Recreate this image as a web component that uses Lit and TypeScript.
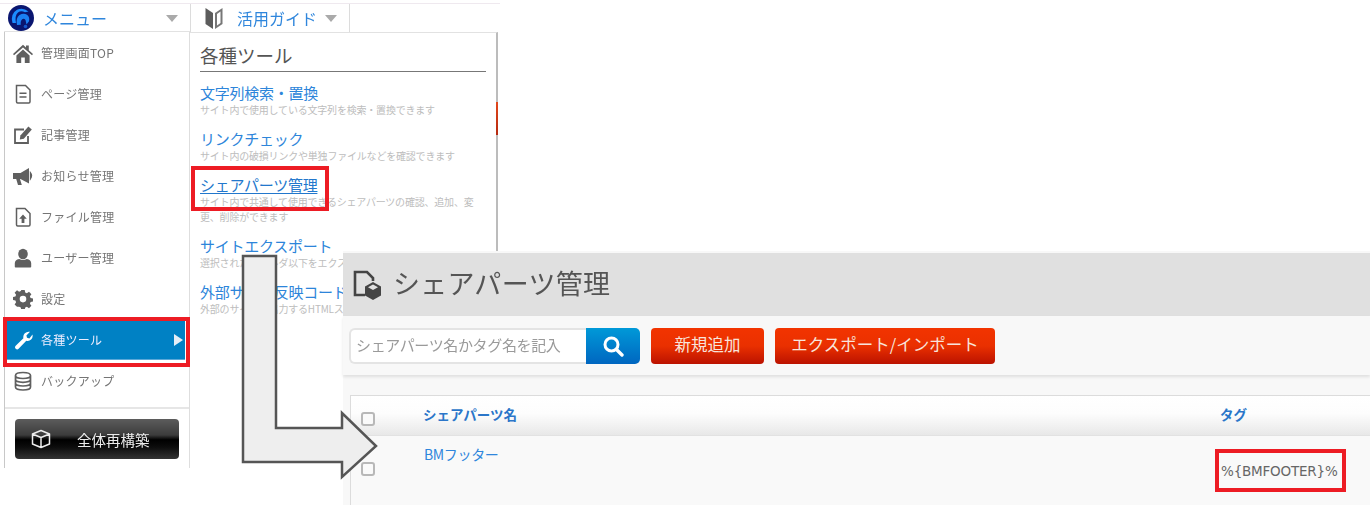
import { LitElement, html, css, svg } from "lit";
import { customElement } from "lit/decorators.js";

const ICONS: Record<string, unknown> = {
  home: svg`<path d="M0 11 10 1.800l3 2.800V2.600h2.800v4.600L20 11l-1 1.200L10 4.400 1 12.200z"/><path d="M3.400 12.600 10 6.600l6.600 6V20h-4.800v-5.500H8.200V20H3.400z"/>`,
  doc: svg`<path fill="none" stroke="currentColor" stroke-width="1.500" d="M3.500 1.500h9l4.500 4.500v11.800q0 1.200-1.200 1.200H4.700q-1.200 0-1.200-1.200z"/><path d="M6.500 8.400h7v1.500h-7zM6.500 12.200h7v1.500h-7z"/>`,
  edit: svg`<path fill="none" stroke="currentColor" stroke-width="1.800" d="M15 11v7H2V4.500h9"/><path d="M6.800 14.500l.6-4L15.400 1.500l3.400 3-8 9.200z"/>`,
  mega: svg`<path d="M0 7h7.500L16 2v15.500L7.500 13H7l1.800 6H5L3.200 13H0z"/><path d="M17.400 6.500q2.400 3 0 6.500z" stroke="currentColor" stroke-width="1.200"/>`,
  file: svg`<path fill="none" stroke="currentColor" stroke-width="1.500" d="M3.500 1.500h8.500l5 5v11.300q0 1.200-1.200 1.200H4.700q-1.200 0-1.200-1.200z"/><path d="M10 7.500l3.800 4.200h-2.400V16H8.600v-4.300H6.200z"/>`,
  user: svg`<ellipse cx="10" cy="6" rx="4.800" ry="5.200"/><path d="M1.800 18.800v-3.500Q1.800 11.800 6.200 11q3.800 2 7.600 0 4.400.8 4.400 4.300v3.500q0 .7-.8.7H2.600q-.8 0-.8-.7z"/>`,
  gear: svg`<path fill-rule="evenodd" d="M8.300 1h3.400l.5 2.600 1.700.7L16 2.800l2.400 2.400-1.500 2.100.7 1.700 2.600.5v3l-2.600.5-.7 1.700 1.500 2.100-2.400 2.400-2.100-1.500-1.700.7-.5 2.600H8.300l-.5-2.600-1.700-.7L4 17.800l-2.400-2.400 1.500-2.100-.7-1.700L-.2 11V8l2.600-.5.700-1.700-1.500-2.100L4 1.300l2.100 1.500 1.700-.7zM10 6.800a3.300 3.300 0 1 0 0 6.600 3.300 3.300 0 0 0 0-6.600z"/>`,
  wrench: svg`<path d="M19.500 4.600q.6 3-1.400 5-2 1.900-4.800 1.200L5.600 18.800q-1.400 1.200-2.900 0-1.400-1.500 0-3l7.700-7.500Q9.800 5.400 11.800 3.200 14 1.200 17 1.800L13.400 5.400l.6 2.400 2.400.6z"/>`,
  db: svg`<path fill="none" stroke="currentColor" stroke-width="1.700" d="M2.500 4.500Q2.500 1.500 10 1.500t7.500 3v11.500q0 3-7.500 3t-7.500-3zM2.500 4.500q0 3 7.500 3t7.500-3M2.500 8.300q0 3 7.500 3t7.500-3M2.500 12q0 3 7.500 3t7.500-3"/>`,
};

const ITEMS = [
  ["home", "管理画面TOP"],
  ["doc", "ページ管理"],
  ["edit", "記事管理"],
  ["mega", "お知らせ管理"],
  ["file", "ファイル管理"],
  ["user", "ユーザー管理"],
  ["gear", "設定"],
  ["wrench", "各種ツール"],
  ["db", "バックアップ"],
];

const TOOLS = [
  ["文字列検索・置換", "サイト内で使用している文字列を検索・置換できます"],
  ["リンクチェック", "サイト内の破損リンクや単独ファイルなどを確認できます"],
  ["シェアパーツ管理", "サイト内で共通して使用できるシェアパーツの確認、追加、変更、削除ができます"],
  ["サイトエクスポート", "選択されたフォルダ以下をエクスポートできます"],
  ["外部サイト反映コード", "外部のサイトへ出力するHTMLスニペットです"],
];

@customElement("app-root")
export class AppRoot extends LitElement {
  static styles = css`
    :host {
      display: block;
      position: relative;
      width: 1370px;
      height: 509px;
      overflow: hidden;
      background: #fff;
      font-family: "Noto Sans CJK JP", "Noto Sans", sans-serif;
    }
    .shot { position: absolute; filter: blur(0.45px); }

    /* left screenshot */
    .menu-shot { left: 0; top: 0; width: 500px; height: 468px; padding-top: 3px; box-sizing: border-box; display: flex; flex-direction: column; }
    .topline { height: 1px; background: #efe9ef; flex: none; width: 500px; }
    .bar { height: 28px; flex: none; display: flex; align-items: center; box-sizing: border-box; }
    .tab { display: flex; align-items: center; height: 100%; box-sizing: border-box; border-right: 1px solid #dcdcdc; color: #2f86dc; line-height: 24px; }
    .tab-menu { width: 191px; padding-left: 8px; font-size: 16px; }
    .tab-guide { width: 159px; padding-left: 13px; font-size: 16px; }
    .tab-menu .logo { margin-right: 9px; }
    .tab-menu .tri { margin-left: auto; margin-right: 12px; }
    .tab-guide .book { margin-right: 13px; }
    .tab-guide .tri { margin-left: 8px; }
    .tri { width: 0; height: 0; border-style: solid; border-width: 7px 6px 0; border-color: #aaa transparent transparent; margin-top: 1px; }
    .body { flex: 1; display: flex; margin-left: 4px; position: relative; }
    aside { width: 186px; flex: none; box-sizing: border-box; border-left: 1px solid #c8c8c8; border-right: 1px solid #dedede; box-shadow: 0 -1px 0 #e2e2e2; background: #fff; }
    .row { height: 41px; margin: 0 0 0 2px; width: 178px; display: flex; align-items: center; font-size: 12px; letter-spacing: 0.25px; color: #757575; box-sizing: border-box; padding-left: 6px; }
    .row svg { width: 20px; height: 20px; fill: currentColor; color: #5f5f5f; flex: none; margin-right: 8px; }
    .row.on { background: #0081c4; color: #eef; border-bottom: 1px solid #5aa8d8; padding-top: 1px; }
    .row.on svg { color: #fff; }
    .row .go { margin-left: auto; margin-right: 2px; width: 0; height: 0; border-style: solid; border-width: 6.500px 0 6.500px 9px; border-color: transparent transparent transparent #e4eef6; }
    .rebuild-wrap { margin-top: 6px; border-top: 2px solid #e6e6e6; padding: 10px 10px 0 10px; }
    .rebuild { height: 40px; border-radius: 4px; display: flex; align-items: center; color: #ececec; font-size: 14.500px; background: linear-gradient(#5c5c5c 0%, #3c3c3c 40%, #000 52%, #0c0c0c 70%, #333 100%); padding-left: 16px; box-sizing: border-box; }
    .rebuild svg { width: 20px; height: 20px; margin-right: 26px; flex: none; }
    .sub { width: 308px; flex: none; box-sizing: border-box; border-right: 2px solid #bcbcbc; border-top: 1px solid #e2e2e2; padding: 0 10px; background: #fff; position: relative; height: 100%; }
    .sub-title { height: 38px; line-height: 44px; font-size: 18.500px; color: #555; border-bottom: 1px solid #777; margin-bottom: 10px; }
    .tool { margin-bottom: 11px; }
    .tool a { display: block; line-height: 22px; height: 20px; font-size: 15px; letter-spacing: -0.25px; color: #2d85da; white-space: nowrap; }
    .tool.cur a { color: #2277cc; text-decoration: underline; text-underline-offset: 2px; text-decoration-thickness: 1px; }
    .tool p { margin: 0; font-size: 10px; line-height: 15px; letter-spacing: -0.2px; color: #bdbdbd; }
    .peek { position: absolute; right: -2px; top: 69px; width: 2px; height: 33px; background: linear-gradient(#e2471c, #b52a10); }

    /* right screenshot */
    .parts-shot { left: 343px; top: 251px; width: 1027px; height: 254px; background: #f8f8f8; display: flex; flex-direction: column; }
    .head { margin-top: 2px; height: 63px; flex: none; background: #e0e0e0; display: flex; align-items: center; padding: 0 0 4px 9px; box-sizing: border-box; font-size: 27px; letter-spacing: 0.3px; color: #555; line-height: 40px; }
    .head svg { width: 30px; height: 32px; margin: 4px 11px 0 0; flex: none; }
    .tools { height: 59px; flex: none; box-sizing: border-box; padding: 12px 6px 0; display: flex; background: #f8f8f8; box-shadow: 0 2px 3px rgba(0,0,0,.1); }
    .search { width: 237px; height: 36px; box-sizing: border-box; background: #fff; border: 2px solid #e4e4e4; border-right: 0; border-radius: 6px 0 0 6px; color: #9a9a9a; font-size: 15px; line-height: 30px; padding-left: 5px; letter-spacing: -0.35px; white-space: nowrap; }
    .sbtn { width: 54px; height: 36px; background: linear-gradient(#0099d8, #0066c0); border-radius: 0 5px 5px 0; display: flex; align-items: center; justify-content: center; margin-right: 11px; }
    .sbtn svg { width: 22px; height: 22px; }
    .rbtn { height: 36px; border-radius: 4px; background: linear-gradient(#f23400 0%, #ea3000 50%, #bb1200 100%); color: #f8e4dc; display: flex; align-items: center; justify-content: center; box-sizing: border-box; padding-bottom: 4px; font-size: 16.500px; letter-spacing: 0; white-space: nowrap; }
    .r1 { width: 113px; margin-right: 11px; }
    .r2 { width: 220px; }
    .table { margin: 20px 0 0 7px; flex: 1; border-left: 1px solid #dcdcdc; border-top: 1px solid #dcdcdc; display: flex; flex-direction: column; min-height: 0; }
    .thead, .trow { display: grid; grid-template-columns: 72px 797px 1fr; }
    .thead { height: 40px; flex: none; align-items: center; background: linear-gradient(#fff 0%, #fdfdfd 45%, #e8e8e8 100%); border-bottom: 1px solid #e2e2e2; font-size: 13.500px; font-weight: 700; color: #2b76c9; padding-bottom: 3px; box-sizing: border-box; }
    .trow { flex: 1; background: #f9f9f9; }
    .check { width: 14px; height: 14px; box-sizing: border-box; border: 2px solid #b8b8b8; border-radius: 3px; background: #fafafa; margin-left: 10px; }
    .thead .check { margin-top: 9px; }
    .trow .check { margin-top: 26px; }
    .trow .name { margin-top: 9px; color: #2f86dc; font-size: 14px; line-height: 18px; margin-left: 1px; letter-spacing: -0.35px; }
    .trow .tag { margin-top: 25px; margin-left: 1px; color: #666; font-family: "DejaVu Sans", sans-serif; font-size: 13.500px; line-height: 20px; letter-spacing: -0.2px; white-space: nowrap; }

    /* annotations on top of the screenshots */
    .red { position: absolute; box-sizing: border-box; border: 4px solid #ed1c24; }
    .red-row { left: 3px; top: 317px; width: 187px; height: 50px; }
    .red-link { left: 191px; top: 166px; width: 138px; height: 45px; }
    .red-tag { left: 1215px; top: 449px; width: 131px; height: 43px; }
    .arrow { position: absolute; left: 0; top: 0; width: 1370px; height: 509px; pointer-events: none; }
  `;

  private logo() {
    return html`<svg class="logo" width="26" height="26" viewBox="0 0 26 26">
      <circle cx="13" cy="13" r="13" fill="#0a1670"/>
      <path d="M4.500 18Q2 9 9 4.800 15 2 20.500 6.500l-3.500.8Q13 5 10 7.500q-3.500 3-2 10.500z" fill="#1c8cff"/>
      <path d="M9 20q-1.500-7 2.500-10 4-2.500 7.500-.3 3 2.300 2 6.500l-2.500 3.300-1-4.500q-1.500-2-3.300-.8-2 1.500-1.400 5.500z" fill="#1a80f4"/>
      <circle cx="17.500" cy="21.500" r="1.800" fill="#1558cc"/>
    </svg>`;
  }

  render() {
    return html`
      <section class="shot menu-shot">
        <div class="topline"></div>
        <div class="bar">
          <div class="tab tab-menu">${this.logo()}<span>メニュー</span><i class="tri"></i></div>
          <div class="tab tab-guide">
            <svg class="book" width="20" height="24" viewBox="0 0 20 24">
              <path d="M1.500 2l7.500 5v16l-7.500-5z" fill="#5c5c5c"/>
              <path d="M18.500 2L11 7v16l7.500-5z" fill="#777"/>
              <path d="M16.500 5.500L13 8v11.500l3.500-2.500z" fill="#fff"/>
            </svg>
            <span>活用ガイド</span><i class="tri"></i>
          </div>
        </div>
        <div class="body">
          <aside>
            ${ITEMS.map(([icon, label], i) => html`
              <div class="row ${i === 7 ? "on" : ""}">
                <svg viewBox="0 0 20 20">${ICONS[icon]}</svg>
                <span>${label}</span>
                ${i === 7 ? html`<i class="go"></i>` : ""}
              </div>`)}
            <div class="rebuild-wrap">
              <div class="rebuild">
                <svg viewBox="0 0 20 20" fill="none" stroke="#eee" stroke-width="1.500" stroke-linejoin="round">
                  <path d="M10 1.500 18.500 5v10L10 18.500 1.500 15V5zM1.500 5 10 8.500 18.500 5M10 8.500v10"/>
                </svg>
                <span>全体再構築</span>
              </div>
            </div>
          </aside>
          <div class="sub">
            <div class="sub-title">各種ツール</div>
            ${TOOLS.map(([t, d], i) => html`
              <div class="tool ${i === 2 ? "cur" : ""}"><a>${t}</a><p>${d}</p></div>`)}
            <i class="peek"></i>
          </div>
        </div>
      </section>

      <section class="shot parts-shot">
        <div class="head">
          <svg viewBox="0 0 30 32">
            <path d="M13 26H3V3h12l6 6v3" fill="none" stroke="#444" stroke-width="2.600"/>
            <path d="M21 13l8 4.500v9L21 31l-8-4.500v-9z" fill="#444"/>
            <path d="M21 15.500l5 2.700-5 2.800-5-2.800z" fill="#e0e0e0"/>
          </svg>
          <span>シェアパーツ管理</span>
        </div>
        <div class="tools">
          <div class="search">シェアパーツ名かタグ名を記入</div>
          <div class="sbtn">
            <svg viewBox="0 0 22 22" fill="none" stroke="#fff">
              <circle cx="9.500" cy="9.500" r="6.500" stroke-width="3"/>
              <path d="M14.500 14.500 20 20" stroke-width="3.400" stroke-linecap="round"/>
            </svg>
          </div>
          <div class="rbtn r1">新規追加</div>
          <div class="rbtn r2">エクスポート/インポート</div>
        </div>
        <div class="table">
          <div class="thead">
            <div><div class="check"></div></div>
            <div>シェアパーツ名</div>
            <div>タグ</div>
          </div>
          <div class="trow">
            <div><div class="check"></div></div>
            <div class="name">BMフッター</div>
            <div class="tag">%{BMFOOTER}%</div>
          </div>
        </div>
      </section>

      <svg class="arrow" viewBox="0 0 1370 509">
        <path d="M243 256H276V428H342V413L376 446 342 477V462H243Z" fill="#eee" stroke="#555" stroke-width="2.500" stroke-linejoin="miter"/>
      </svg>
      <div class="red red-row"></div>
      <div class="red red-link"></div>
      <div class="red red-tag"></div>
    `;
  }
}
